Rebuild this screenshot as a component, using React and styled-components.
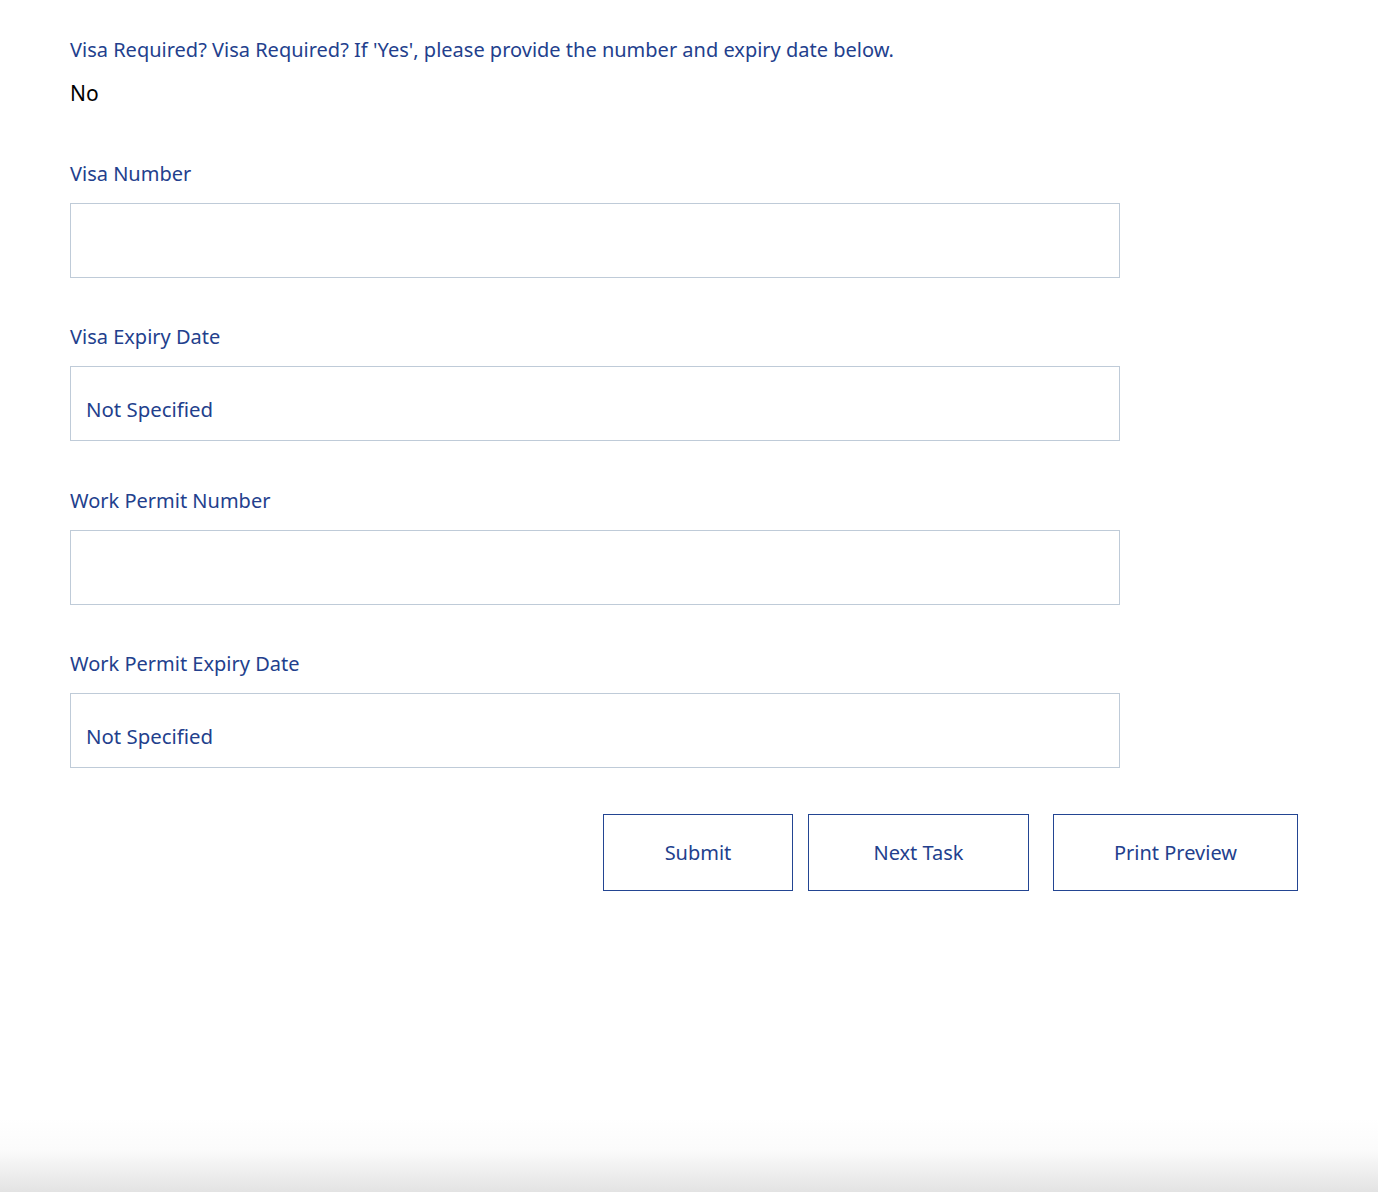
import React from "react";
import styled, { createGlobalStyle } from "styled-components";

const GlobalStyle = createGlobalStyle`
  html, body {
    margin: 0;
    padding: 0;
    background: #ffffff;
  }
  body {
    font-family: "Noto Sans", "Open Sans", sans-serif;
  }
`;

const Page = styled.div`
  min-height: 1192px;
  box-sizing: border-box;
  display: flex;
  flex-direction: column;
  background: linear-gradient(
    to bottom,
    #ffffff 0,
    #ffffff 1118px,
    #fbfbfb 1150px,
    #e3e3e3 1192px
  );
`;

const Form = styled.div`
  padding: 38px 80px 0 70px;
`;

const Question = styled.div`
  color: #233f8d;
  font-size: 20px;
  line-height: 24px;
`;

const Answer = styled.div`
  color: #000000;
  font-size: 21px;
  line-height: 28px;
  margin-top: 17px;
  margin-bottom: 55px;
`;

const FieldList = styled.div`
  display: flex;
  flex-direction: column;
  gap: 47.34px;
`;

const Field = styled.div``;

const Label = styled.div`
  color: #233f8d;
  font-size: 20px;
  line-height: 24px;
  margin-bottom: 17px;
`;

const Box = styled.div`
  width: 1050px;
  height: 75px;
  box-sizing: border-box;
  border: 1px solid #bfcbd8;
  display: flex;
  align-items: flex-end;
  padding: 0 16px 19px 15px;
  color: #233f8d;
  font-size: 20.4px;
  line-height: 24px;
`;

const Actions = styled.div`
  display: flex;
  justify-content: flex-end;
  margin-top: 46px;
`;

const Button = styled.button`
  width: ${(p) => p.w}px;
  height: 77px;
  margin-left: ${(p) => p.gap || 0}px;
  box-sizing: border-box;
  background: #ffffff;
  border: 1px solid #234592;
  color: #233f8d;
  font-family: "Noto Sans", "Open Sans", sans-serif;
  font-size: 20px;
  cursor: pointer;
`;

const fields = [
  { label: "Visa Number", value: "" },
  { label: "Visa Expiry Date", value: "Not Specified" },
  { label: "Work Permit Number", value: "" },
  { label: "Work Permit Expiry Date", value: "Not Specified" },
];

export default function App() {
  return (
    <Page>
      <GlobalStyle />
      <Form>
        <Question>
          Visa Required? Visa Required? If 'Yes', please provide the number and
          expiry date below.
        </Question>
        <Answer>No</Answer>
        <FieldList>
          {fields.map((f) => (
            <Field key={f.label}>
              <Label>{f.label}</Label>
              <Box>{f.value}</Box>
            </Field>
          ))}
        </FieldList>
        <Actions>
          <Button w={190}>Submit</Button>
          <Button w={221} gap={15}>
            Next Task
          </Button>
          <Button w={245} gap={24}>
            Print Preview
          </Button>
        </Actions>
      </Form>
    </Page>
  );
}
